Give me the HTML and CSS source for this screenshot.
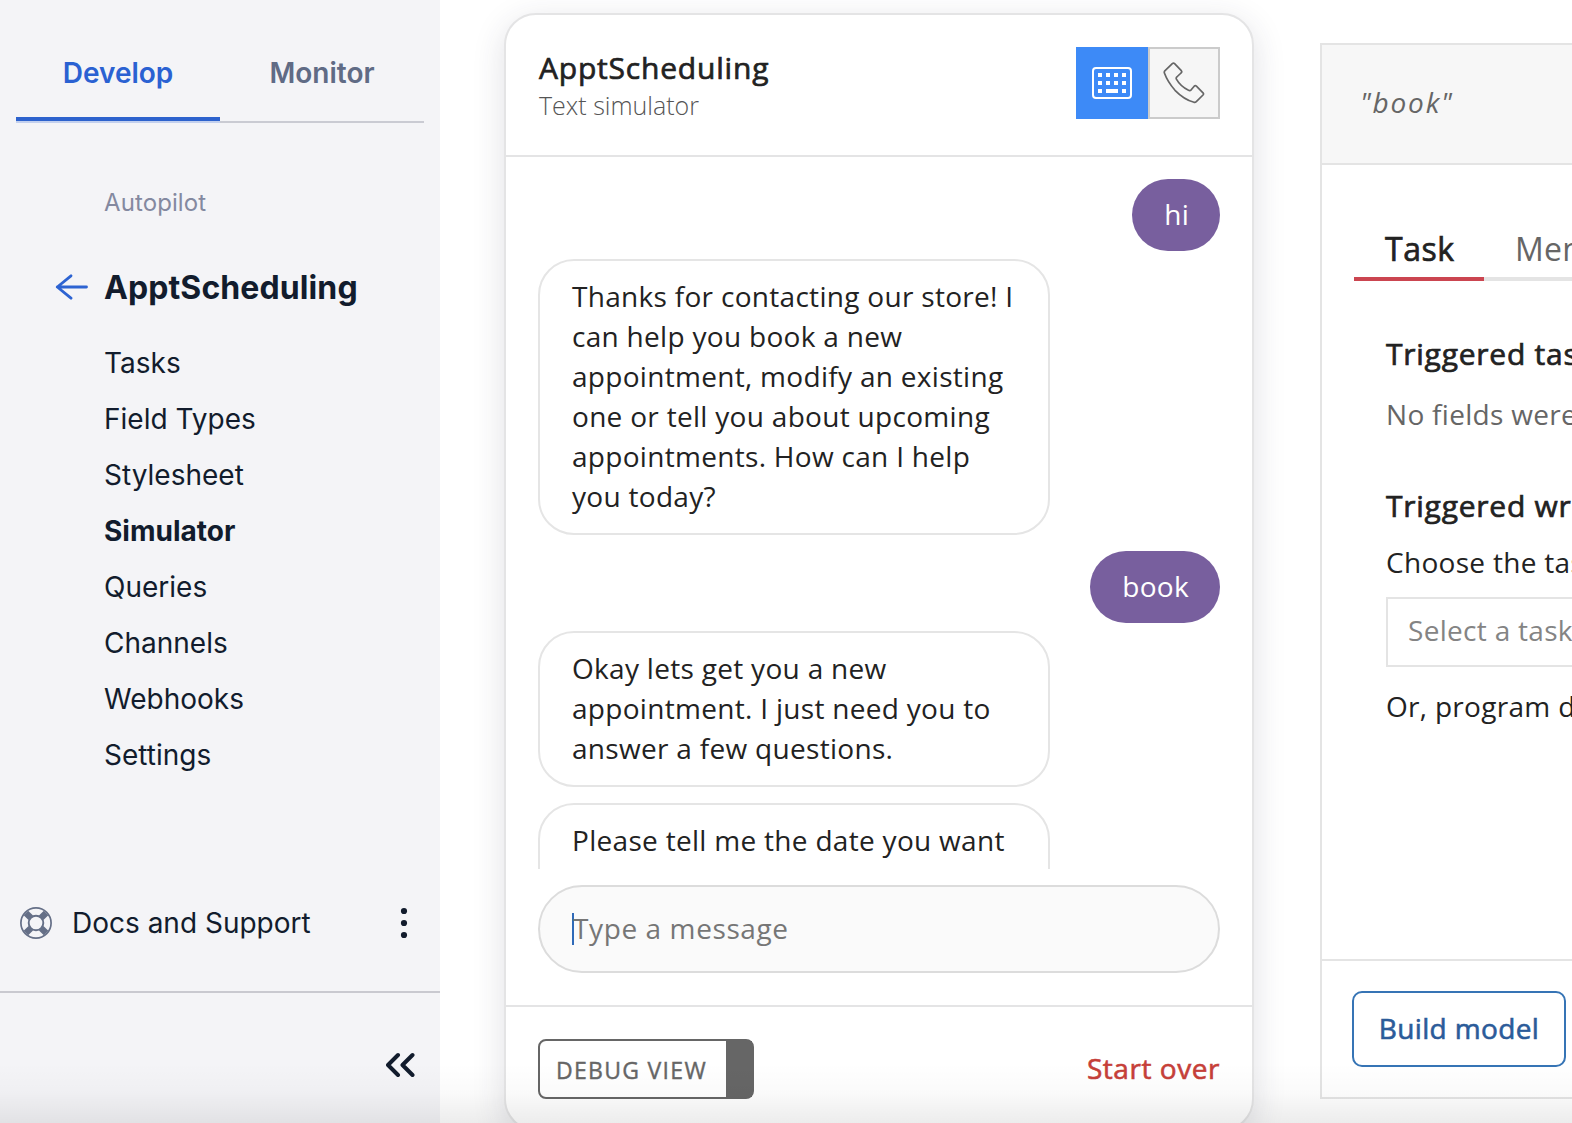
FILE: index.html
```html
<!DOCTYPE html>
<html lang="en">
<head>
<meta charset="utf-8">
<title>ApptScheduling – Simulator</title>
<link rel="stylesheet" href="styles.css">
</head>
<body>
<div class="app">
  <aside class="sidebar">
    <div class="tabs">
      <a class="tab tab-active">Develop</a>
      <a class="tab">Monitor</a>
    </div>
    <div class="section-label">Autopilot</div>
    <div class="project">
      <svg class="back" width="34" height="28" viewBox="0 0 34 28" fill="none" stroke="#2d63d2" stroke-width="2.800" stroke-linecap="round" stroke-linejoin="round"><path d="M32.500 13H3.300M17 1.800 3.300 13l13.700 11.200"/></svg>
      <span>ApptScheduling</span>
    </div>
    <nav class="nav">
      <a>Tasks</a>
      <a>Field Types</a>
      <a>Stylesheet</a>
      <a class="nav-active">Simulator</a>
      <a>Queries</a>
      <a>Channels</a>
      <a>Webhooks</a>
      <a>Settings</a>
    </nav>
    <div class="support">
      <svg width="32" height="32" viewBox="0 0 32 32" fill="none" stroke="#656f87">
        <circle cx="16" cy="16" r="15.100" stroke-width="1.700"/>
        <circle cx="16" cy="16" r="7.300" stroke-width="1.900"/>
        <path stroke-width="6.400" d="M5.900 5.900 10.800 10.800M26.100 5.900 21.200 10.800M5.900 26.100 10.800 21.200M26.100 26.100 21.200 21.200"/>
      </svg>
      <span class="support-text">Docs and Support</span>
      <svg width="8" height="32" viewBox="0 0 8 32" fill="#121c2d"><circle cx="4" cy="4" r="3.100"/><circle cx="4" cy="16" r="3.100"/><circle cx="4" cy="28" r="3.100"/></svg>
    </div>
    <div class="collapse">
      <svg width="32" height="28" viewBox="0 0 32 28" fill="none" stroke="#121c2d" stroke-width="4" stroke-linecap="round" stroke-linejoin="round"><path d="M12 4 2 14l10 10M26.500 4 16.500 14l10 10"/></svg>
    </div>
  </aside>

  <section class="simulator">
    <header class="sim-head">
      <div class="sim-title">
        <h1>ApptScheduling</h1>
        <p>Text simulator</p>
      </div>
      <div class="modes">
        <button class="mode mode-on" aria-label="Text">
          <svg width="40" height="32" viewBox="0 0 40 32" fill="#fff">
            <rect x="1" y="1" width="38" height="30" rx="3" fill="none" stroke="#fff" stroke-width="2"/>
            <path d="M6 6h4v4H6zM14 6h4v4h-4zM22 6h4v4h-4zM30 6h4v4h-4zM6 14h4v4H6zM14 14h4v4h-4zM22 14h4v4h-4zM30 14h4v4h-4zM6 22h4v4H6zM14 22h12v4H14zM30 22h4v4h-4z"/>
          </svg>
        </button>
        <button class="mode mode-off" aria-label="Voice">
          <svg width="42" height="42" viewBox="0 0 42 42" fill="none" stroke="#666" stroke-width="1.700" stroke-linejoin="round"><path d="M9.300 1.700 1.800 8.900Q.9 9.900 1.500 11.200 4.500 19.500 12 28.300 21 37.500 31 40.300 32.300 40.600 33.300 39.700L40 33Q41 31.900 40 30.800L33.400 24.200Q32.300 23.200 31.200 24.200L28.200 27.800Q27 29 25.500 28.300 17.500 24.500 13.400 17.200 12.800 15.900 13.800 15L18 11Q19.300 9.900 18.300 8.700L11.600 1.700Q10.500.7 9.300 1.700Z"/></svg>
        </button>
      </div>
    </header>
    <div class="log">
      <div class="msg user">hi</div>
      <div class="msg bot">Thanks for contacting our store! I<br>can help you book a new<br>appointment, modify an existing<br>one or tell you about upcoming<br>appointments. How can I help<br>you today?</div>
      <div class="msg user">book</div>
      <div class="msg bot">Okay lets get you a new<br>appointment. I just need you to<br>answer a few questions.</div>
      <div class="msg bot bot-last">Please tell me the date you want</div>
    </div>
    <div class="composer"><span class="caret"></span><span class="placeholder">Type a message</span></div>
    <footer class="sim-foot">
      <div class="debug"><span>DEBUG VIEW</span><i></i></div>
      <a class="restart">Start over</a>
    </footer>
  </section>

  <section class="inspector">
    <div class="query">"book"</div>
    <div class="inspector-body">
      <div class="itabs">
        <a class="itab itab-on">Task</a>
        <a class="itab">Memory</a>
      </div>
      <h2 class="h-task">Triggered task</h2>
      <p class="muted">No fields were</p>
      <h2 class="h-wrong">Triggered wrong</h2>
      <p class="choose">Choose the task</p>
      <div class="select">Select a task</div>
      <p class="program">Or, program directly</p>
    </div>
    <div class="inspector-foot"><button class="build">Build model</button></div>
  </section>
</div>
<div class="fade"></div>
</body>
</html>
```
FILE: styles.css
```css
* { box-sizing: border-box; }

body {
  margin: 0;
  width: 1572px;
  height: 1123px;
  overflow: hidden;
  background: #fff;
  font: 28px/40px "Open Sans", "Noto Sans", sans-serif;
  color: #222;
}

h1, h2, p { margin: 0; }
button { font: inherit; padding: 0; }
svg { display: block; flex: none; }

.app { display: flex; height: 1123px; overflow: hidden; }

/* Sidebar */
.sidebar {
  flex: none;
  width: 440px;
  display: flex;
  flex-direction: column;
  background: #f4f4f7;
  font-family: Inter, sans-serif;
  color: #121c2d;
}
.tabs {
  flex: none;
  display: flex;
  margin: 0 16px;
  height: 123px;
  border-bottom: 2px solid #cacbd3;
}
.tab {
  flex: 1;
  padding-top: 53px;
  text-align: center;
  font-weight: 600;
  color: #606b85;
}
.tab-active {
  color: #2a61d2;
  border-bottom: 4px solid #2d62cd;
  box-shadow: 0 2px #c3d0ee;
}
.section-label {
  margin: 60px 0 0 104px;
  font-size: 24px;
  letter-spacing: .1px;
  color: #8489a0;
}
.project {
  display: flex;
  align-items: center;
  gap: 16px;
  margin: 45px 0 0 54px;
  font-size: 32px;
  font-weight: 700;
  letter-spacing: .1px;
}
.nav {
  display: flex;
  flex-direction: column;
  gap: 16px;
  margin: 35px 0 0 104px;
}
.nav-active { font-weight: 700; }
.support {
  display: flex;
  align-items: center;
  margin: 128px 32px 0 20px;
}
.support-text { flex: 1; padding-left: 20px; }
.collapse {
  display: flex;
  justify-content: flex-end;
  margin-top: 48px;
  padding: 58px 22px 0 0;
  border-top: 2px solid #c9c9d0;
}

/* Chat simulator */
.simulator {
  flex: none;
  display: flex;
  flex-direction: column;
  width: 750px;
  height: 1118px;
  margin: 13px 0 0 64px;
  background: #fff;
  border: 2px solid #e4e4e5;
  border-radius: 32px;
  box-shadow: 0 8px 32px rgba(45, 50, 75, .15);
}
.sim-head {
  flex: none;
  display: flex;
  justify-content: space-between;
  height: 142px;
  padding: 32px 32px 0;
  border-bottom: 2px solid #e4e4e5;
}
.sim-title h1 {
  font-size: 30px;
  font-weight: 400;
  -webkit-text-stroke: .7px currentColor;
  letter-spacing: .8px;
  margin: 1px 0 0 1px;
}
.sim-title p {
  font-size: 25px;
  font-weight: 300;
  line-height: 34px;
  margin-left: 1px;
  color: #555;
}
.modes { display: flex; }
.mode {
  display: grid;
  place-items: center;
  width: 72px;
  height: 72px;
  border: 2px solid #cbcbcb;
  background: #f6f6f6;
}
.mode-on { background: #3d8af7; border-color: #3d8af7; }
.log {
  flex: none;
  height: 712px;
  overflow: hidden;
  display: flex;
  flex-direction: column;
  padding: 22px 32px 0;
}
.msg { flex: none; letter-spacing: .3px; }
.user {
  align-self: flex-end;
  height: 72px;
  margin-bottom: 8px;
  padding: 15px 31px 0 32px;
  border-radius: 36px;
  background: #785f9e;
  color: #fff;
}
.bot {
  width: 512px;
  margin-bottom: 16px;
  padding: 15px 0 17px 32px;
  border: 2px solid #e5e5e5;
  border-radius: 36px;
  white-space: nowrap;
}
.bot-last { height: 116px; }
.composer {
  flex: none;
  display: flex;
  align-items: center;
  height: 88px;
  margin: 16px 32px 32px;
  padding: 0 32px;
  border: 2px solid #dcdcdc;
  border-radius: 44px;
  background: #fafafa;
  color: #767676;
  letter-spacing: .6px;
}
.placeholder { padding-bottom: 2px; }
.caret { width: 2px; height: 32px; margin-right: -1px; background: #2f6ab8; }
.sim-foot {
  flex: 1;
  display: flex;
  align-items: flex-start;
  justify-content: space-between;
  padding: 32px 32px 0;
  border-top: 2px solid #e4e4e5;
}
.debug {
  display: flex;
  width: 216px;
  height: 60px;
  border: 2px solid #666;
  border-radius: 8px;
  font-size: 23px;
  -webkit-text-stroke: .4px currentColor;
  line-height: 59px;
  letter-spacing: 1.3px;
  color: #666;
}
.debug span { flex: 1; padding-left: 16px; white-space: nowrap; }
.debug i { width: 26px; background: #666; }
.restart {
  margin-top: 9px;
  -webkit-text-stroke: .6px currentColor;
  letter-spacing: .55px;
  color: #c63f39;
}

/* Inspector */
.inspector {
  flex: none;
  display: flex;
  flex-direction: column;
  width: 600px;
  height: 1056px;
  margin: 43px 0 0 66px;
  border: 2px solid #e4e4e4;
  white-space: nowrap;
}
.query {
  flex: none;
  height: 120px;
  padding: 37px 0 0 38px;
  border-bottom: 2px solid #e4e4e4;
  background: #f7f7f7;
  font-style: italic;
  letter-spacing: 1.8px;
  color: #666;
}
.inspector-body {
  flex: none;
  height: 794px;
  padding: 62px 0 0 32px;
  letter-spacing: .3px;
}
.itabs {
  display: flex;
  height: 54px;
  border-bottom: 4px solid #e4e4e4;
  font-size: 32px;
  line-height: 44px;
  color: #666;
}
.itab { height: 54px; padding: 0 31px; }
.itab-on {
  width: 130px;
  color: #222;
  -webkit-text-stroke: .7px currentColor;
  letter-spacing: .5px;
  border-bottom: 4px solid #cb4550;
}
.inspector-body h2, .inspector-body p { margin-left: 32px; }
.inspector-body h2 {
  font-size: 30px;
  font-weight: 400;
  -webkit-text-stroke: .7px currentColor;
  letter-spacing: .75px;
}
.h-task { padding-top: 53px; }
.inspector-body .muted { margin-top: 20px; color: #666; }
.inspector-body .h-wrong { margin-top: 52px; }
.inspector-body .choose { margin-top: 16px; }
.select {
  height: 70px;
  margin: 15px 0 19px 32px;
  padding: 11px 20px;
  border: 2px solid #e4e4e4;
  color: #848484;
}
.inspector-foot {
  flex: 1;
  padding: 30px 30px 0;
  border-top: 2px solid #e4e4e4;
}
.build {
  display: block;
  width: 214px;
  height: 76px;
  padding-bottom: 3px;
  border: 2px solid #3674b5;
  border-radius: 10px;
  background: #fff;
  -webkit-text-stroke: .6px currentColor;
  letter-spacing: .35px;
  color: #2b5b99;
}

/* Shade along the lower edge of the window */
.fade {
  position: absolute;
  left: 0;
  top: 1063px;
  width: 1572px;
  height: 60px;
  background: linear-gradient(rgba(0, 0, 0, 0), rgba(0, 0, 0, .02) 50%, rgba(0, 0, 0, .075));
  pointer-events: none;
}
```
